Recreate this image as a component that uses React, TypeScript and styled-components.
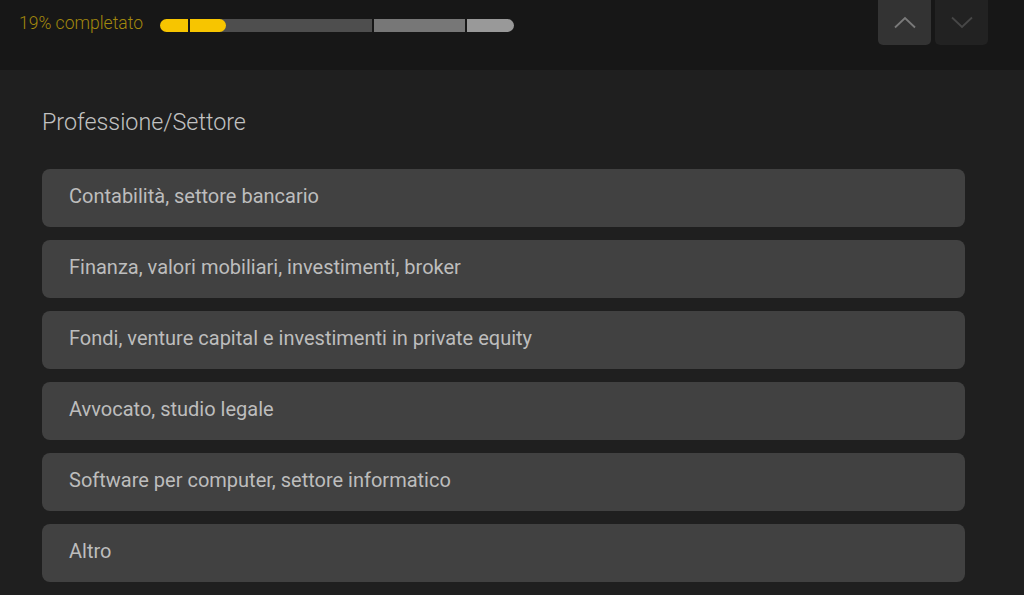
import React from "react";
import styled, { createGlobalStyle } from "styled-components";

const GlobalStyle = createGlobalStyle`
  html, body {
    margin: 0;
    padding: 0;
    background: #1f1f1f;
  }
  body {
    font-family: Roboto, "Liberation Sans", sans-serif;
  }
`;

const Page = styled.div`
  width: 1024px;
  height: 595px;
  overflow: hidden;
  background: #1f1f1f;
`;

const TopBar = styled.div`
  height: 70px;
  background: #171717;
  display: flex;
  align-items: flex-start;
  padding: 0 36px 0 19px;
  box-sizing: border-box;
`;

const ProgressLabel = styled.div`
  font-size: 17.5px;
  font-weight: 300;
  color: #a3880d;
  line-height: 20px;
  margin-top: 13px;
  width: 141px;
  white-space: nowrap;
`;

const Track = styled.div`
  display: flex;
  gap: 2px;
  height: 13px;
  margin-top: 19px;
  width: 354px;
`;

const Section = styled.div<{ $w: number; $bg: string; $last?: boolean; $first?: boolean }>`
  width: ${(p) => p.$w}px;
  height: 100%;
  background: ${(p) => p.$bg};
  border-radius: ${(p) => (p.$first ? "7px 0 0 7px" : p.$last ? "0 7px 7px 0" : "0")};
  overflow: hidden;
  display: flex;
`;

const Fill = styled.div`
  height: 100%;
  background: #f7c500;
  border-radius: 0 7px 7px 0;
`;

const Spacer = styled.div`
  flex: 1;
`;

const NavButtons = styled.div`
  display: flex;
  gap: 4px;
`;

const NavButton = styled.div<{ $active?: boolean }>`
  width: 53px;
  height: 45px;
  border-radius: 0 0 5px 5px;
  background: ${(p) => (p.$active ? "#333333" : "#222222")};
  display: flex;
  align-items: center;
  justify-content: center;
  color: ${(p) => (p.$active ? "#7a7a7a" : "#474747")};
`;

const Content = styled.div`
  padding: 25px 59px 0 42px;
`;

const Title = styled.h2`
  margin: 0 0 34px;
  font-size: 23.3px;
  font-weight: 300;
  color: #c2c2c2;
  line-height: 26px;
  padding-top: 14px;
`;

const Options = styled.div`
  display: flex;
  flex-direction: column;
  gap: 13px;
`;

const Option = styled.div`
  height: 58px;
  background: #414141;
  border-radius: 8px;
  display: flex;
  align-items: center;
  padding: 0 0 5px 27px;
  font-size: 20px;
  color: #bdbdbd;
  box-sizing: border-box;
`;

const Chevron = ({ up }: { up?: boolean }) => (
  <svg width="22" height="13" viewBox="0 0 22 13" fill="none">
    <path
      d={up ? "M1 11.5 L11 2 L21 11.5" : "M1 1.5 L11 11 L21 1.5"}
      stroke="currentColor"
      strokeWidth="1.8"
    />
  </svg>
);

const items = [
  "Contabilità, settore bancario",
  "Finanza, valori mobiliari, investimenti, broker",
  "Fondi, venture capital e investimenti in private equity",
  "Avvocato, studio legale",
  "Software per computer, settore informatico",
  "Altro",
];

export default function App() {
  return (
    <Page>
      <GlobalStyle />
      <TopBar>
        <ProgressLabel>19% completato</ProgressLabel>
        <Track>
          <Section $w={28} $bg="#f7c500" $first />
          <Section $w={182} $bg="#4e4e4e">
            <Fill style={{ width: 36 }} />
          </Section>
          <Section $w={91} $bg="#777777" />
          <Section $w={47} $bg="#999999" $last />
        </Track>
        <Spacer />
        <NavButtons>
          <NavButton $active>
            <Chevron up />
          </NavButton>
          <NavButton>
            <Chevron />
          </NavButton>
        </NavButtons>
      </TopBar>
      <Content>
        <Title>Professione/Settore</Title>
        <Options>
          {items.map((t) => (
            <Option key={t}>{t}</Option>
          ))}
        </Options>
      </Content>
    </Page>
  );
}
